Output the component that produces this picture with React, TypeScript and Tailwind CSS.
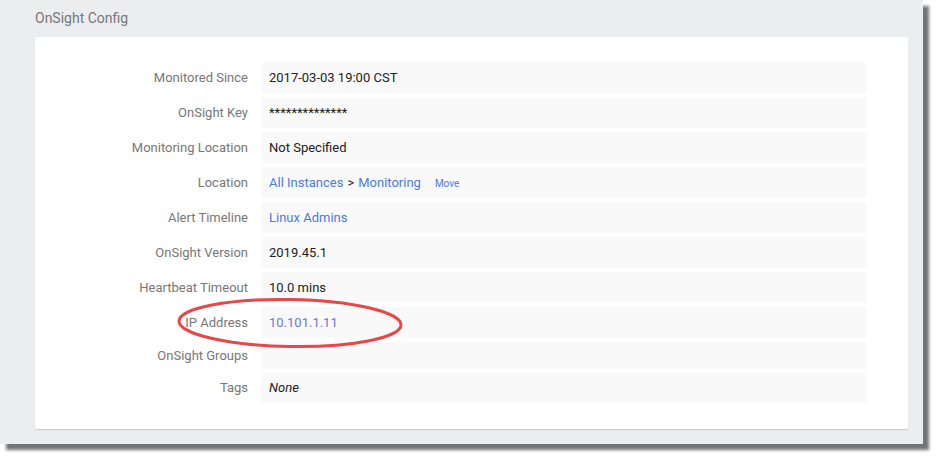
const rows: { label: string; h?: string; value: React.ReactNode }[] = [
  { label: "Monitored Since", value: <span className="text-[#222]">2017-03-03 19:00 CST</span> },
  { label: "OnSight Key", value: <span className="text-[#222]">**************</span> },
  { label: "Monitoring Location", value: <span className="text-[#222]">Not Specified</span> },
  {
    label: "Location",
    value: (
      <span className="flex items-baseline">
        <span className="text-[#4b7be5]">All Instances</span>
        <span className="text-[#222] mx-[4px]">&gt;</span>
        <span className="text-[#4b7be5]">Monitoring</span>
        <span className="text-[#4b7be5] text-[10px] ml-[14px]">Move</span>
      </span>
    ),
  },
  { label: "Alert Timeline", value: <span className="text-[#4b7be5]">Linux Admins</span> },
  { label: "OnSight Version", value: <span className="text-[#222]">2019.45.1</span> },
  { label: "Heartbeat Timeout", value: <span className="text-[#222]">10.0 mins</span> },
  { label: "IP Address", value: <span className="text-[#6f74e0]">10.101.1.11</span> },
  { label: "OnSight Groups", h: "h-[27px]", value: null },
  { label: "Tags", h: "h-[30px]", value: <span className="text-[#222] italic">None</span> },
]

export default function App() {
  return (
    <div className="relative w-[938px] h-[460px] bg-white font-['Roboto',sans-serif] text-[13px]">
      <div className="w-[923px] h-[444px] bg-[#ecedef] shadow-[6px_6px_3px_rgba(0,0,0,0.55)]">
        {/* Header */}
        <div className="h-[37px] pl-[35px] pt-[8px] text-[14px] text-[#777]">OnSight Config</div>

        {/* Card */}
        <div className="ml-[35px] w-[873px] bg-white rounded-[2px] shadow-[0_1px_1px_rgba(0,0,0,0.15)] pt-[25px] pb-[26px]">
          <div className="flex flex-col gap-[4px]">
            {rows.map((r) => (
              <div key={r.label} className={`flex items-center ${r.h ?? "h-[31px]"}`}>
                <div className="w-[213px] text-right text-[#777]">{r.label}</div>
                <div className="ml-[13px] w-[606px] h-full rounded-[3px] bg-[#f9f9f9] flex items-center px-[8px]">
                  {r.value}
                </div>
              </div>
            ))}
          </div>
        </div>
      </div>

      {/* Red highlight ellipse */}
      <svg className="absolute left-0 top-0 pointer-events-none" width="938" height="460">
        <ellipse
          cx="290"
          cy="323"
          rx="111"
          ry="23.5"
          fill="none"
          stroke="#e8474a"
          strokeWidth="3"
          transform="rotate(1 290 323)"
        />
      </svg>
    </div>
  )
}
